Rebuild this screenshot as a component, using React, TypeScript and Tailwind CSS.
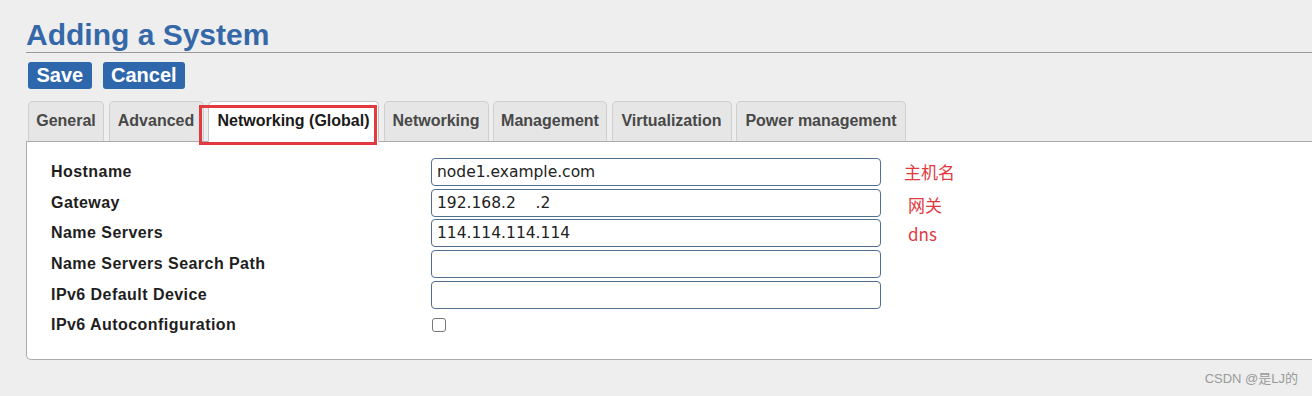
const tabs = [
  { label: "General", w: "w-[76px]" },
  { label: "Advanced", w: "w-[95px]" },
  { label: "Networking (Global)", w: "w-[171px]" },
  { label: "Networking", w: "w-[105px]" },
  { label: "Management", w: "w-[114px]" },
  { label: "Virtualization", w: "w-[120px]" },
  { label: "Power management", w: "w-[170px]" },
];

const fields: { label: string; value?: string; note?: string; noteClass?: string; checkbox?: boolean }[] = [
  { label: "Hostname", value: "node1.example.com", note: "主机名", noteClass: "ml-[23px]" },
  { label: "Gateway", value: "192.168.2    .2", note: "网关", noteClass: "ml-[27px] mt-[4px]" },
  { label: "Name Servers", value: "114.114.114.114", note: "dns", noteClass: "ml-[27px]" },
  { label: "Name Servers Search Path", value: "" },
  { label: "IPv6 Default Device", value: "" },
  { label: "IPv6 Autoconfiguration", checkbox: true },
];

export default function App() {
  return (
    <div className="relative w-[1312px] h-[396px] overflow-hidden bg-[#eeeeee] pl-[26px] pt-[18px] font-['Liberation_Sans',Arial,sans-serif]">
      {/* Title */}
      <h1 className="text-[30px] leading-[34px] font-bold text-[#3568a8] border-b border-[#9a9a9a]">
        Adding a System
      </h1>

      {/* Actions */}
      <div className="flex gap-[11px] mt-[9px] ml-[2px]">
        <button className="h-[27px] px-[8.5px] rounded-[3px] bg-[#2f67ad] text-white text-[20px] leading-[27px] font-bold">
          Save
        </button>
        <button className="h-[27px] px-[8.3px] rounded-[3px] bg-[#2f67ad] text-white text-[20px] leading-[27px] font-bold">
          Cancel
        </button>
      </div>

      {/* Tabs */}
      <div className="relative z-10 flex items-start gap-[4.5px] h-[41px] -mb-px mt-[12px] ml-[2px]">
        {tabs.map((t, i) =>
          i === 2 ? (
            <div
              key={t.label}
              className={`${t.w} h-[41px] text-center border border-b-0 border-[#c4c4c4] rounded-t-[5px] bg-white text-[16px] leading-[38px] font-bold text-[#1a1a1a]`}
            >
              {t.label}
            </div>
          ) : (
            <div
              key={t.label}
              className={`${t.w} h-[40px] text-center border border-b-0 border-[#cfcfcf] rounded-t-[5px] bg-[#e6e6e6] text-[16px] leading-[38px] font-bold text-[#484848]`}
            >
              {t.label}
            </div>
          )
        )}
      </div>

      {/* Panel */}
      <div className="w-[1300px] bg-white border border-r-0 border-[#ababab] rounded-bl-[5px] pt-[14.5px] pb-[18px] pl-[24px]">
        {fields.map((f) => (
          <div key={f.label} className="flex items-center h-[30.7px]">
            <div className="w-[380px] text-[16px] font-bold tracking-[0.45px] text-[#1e1e1e]">
              {f.label}
            </div>
            {f.checkbox ? (
              <input
                type="checkbox"
                readOnly
                className="appearance-none w-[14px] h-[14px] ml-px border border-[#767676] rounded-[3px] bg-white"
              />
            ) : (
              <input
                type="text"
                readOnly
                value={f.value}
                className="w-[450px] h-[28px] px-[5px] border border-[#52708e] rounded-[4px] bg-white text-[15.5px] text-[#222] font-['DejaVu_Sans',Verdana,sans-serif] outline-none"
              />
            )}
            {f.note && (
              <span
                className={`${f.noteClass} text-[17px] leading-none text-[#e0393e] font-['Noto_Sans_CJK_SC','Noto_Sans',sans-serif]`}
              >
                {f.note}
              </span>
            )}
          </div>
        ))}
      </div>

      {/* annotation box */}
      <div className="absolute z-20 left-[199px] top-[105px] w-[178px] h-[40px] border-[3px] border-[#e13a40] pointer-events-none" />

      {/* watermark */}
      <div className="absolute right-[14px] bottom-[8px] text-[13px] text-[#9a9a9a] font-['Liberation_Sans','Noto_Sans_CJK_SC',sans-serif]">
        CSDN @是LJ的
      </div>
    </div>
  );
}
